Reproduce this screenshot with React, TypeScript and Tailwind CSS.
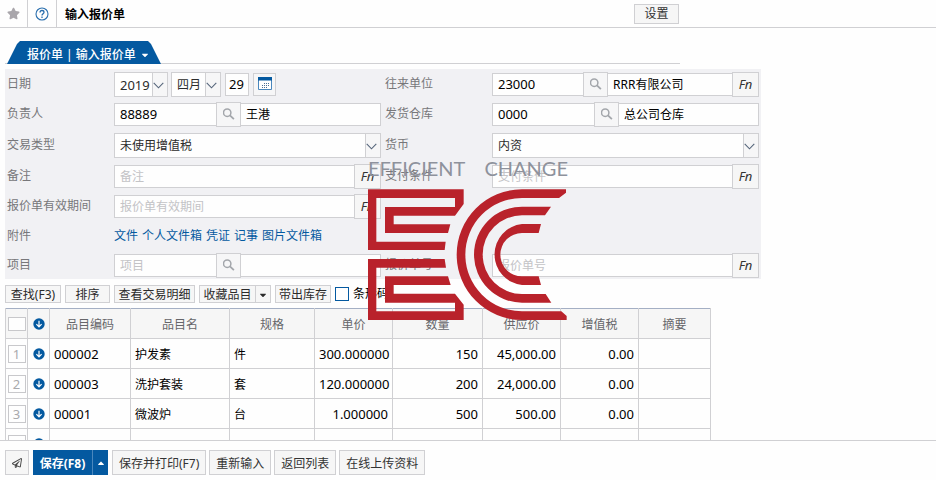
import type { ReactNode } from "react";
import { FaStar, FaCaretDown, FaCaretUp, FaRegPaperPlane } from "react-icons/fa";

const FONT = "font-['Noto_Sans','Noto_Sans_CJK_SC',sans-serif]";

// Icons
const SearchIcon = () => (
  <svg viewBox="0 0 12 12" className="size-3" fill="none" stroke="#a3a6ab">
    <circle cx="4.2" cy="4.7" r="3.7" strokeWidth="1.5" />
    <path d="M6.9 7.4 10.9 11.2" strokeWidth="1.8" />
  </svg>
);

const Chevron = () => (
  <svg viewBox="0 0 11 7" className="h-[7px] w-[11px]" fill="none" stroke="#55657a">
    <path d="M.7.8 5.5 5.8 10.3.8" strokeWidth="1.1" />
  </svg>
);

const CalendarIcon = () => (
  <svg viewBox="0 0 14 14" className="size-[14px] shrink-0">
    <path d="M.5.5h13v12H.5z" fill="#fff" stroke="#4a87bd" />
    <path d="M0 0h14v3.500H0z" fill="#0459a0" />
    <path
      d="M6 6h1v1H6zM8 6h1v1H8zM10 6h1v1h-1zM4 8h1v1H4zM6 8h1v1H6zM8 8h1v1H8zM10 8h1v1h-1zM4 10h1v1H4zM6 10h1v1H6zM8 10h1v1H8z"
      fill="#4a6f95"
    />
  </svg>
);

const HelpIcon = () => (
  <svg viewBox="0 0 14 14" className="size-[14px]" fill="none" stroke="#2a6fae">
    <circle cx="7" cy="7" r="6" strokeWidth="1.1" />
    <path d="M5 5.600C5 4.200 5.800 3.500 7 3.500s2 .8 2 1.800c0 1.400-2 1.500-2 3.200M7 9.600v1.300" strokeWidth="1.3" />
  </svg>
);

const DownIcon = () => (
  <svg viewBox="0 0 12 12" className="size-3" fill="none">
    <circle cx="6" cy="6" r="5.7" fill="#0459a0" />
    <path d="M6 2.800v6M3.400 6.200 6 8.800l2.600-2.600" stroke="#fff" strokeWidth="1.200" />
  </svg>
);

const Logo = () => (
  <div className="pointer-events-none absolute top-[159px] left-[368px] w-[200px]">
    <div className="flex justify-between font-['Lato',sans-serif] text-[20px] leading-[18px] text-[#8e929c]">
      <span>EFFICIENT</span>
      <span>CHANGE</span>
    </div>
    <svg viewBox="84 117 600 393" className="mt-3 h-[131px] w-[200px]" fill="#b9222b">
      <path d="M84 118H371V162L345 197H161V223H331L324 249H135V171H345V144H109V275H317L314 300H84Z" />
      <path d="M84 327H314L318 353H109V484H345V458H135V379H324L332 405H161V431H345L371 464V510H84Z" />
      <path d="M546 118H678V128L657 144H546A170 170 0 0 0 546 484H664L680 498V510H546A196 196 0 0 1 546 118Z" />
      <path d="M546 170H633L615 196H546A118 118 0 0 0 546 432H617L634 458H546A144 144 0 0 1 546 170Z" />
      <path d="M546 222H603L596 249H546A65 65 0 0 0 546 379H596L603 405H546A92 92 0 0 1 546 222Z" />
    </svg>
  </div>
);

// Form parts
type FieldProps = { label: string; id?: string; tall?: boolean; short?: boolean; children: ReactNode };

const Field = ({ label, id, tall, short, children }: FieldProps) => (
  <div className={`flex items-center ${tall ? "h-8" : short ? "h-7" : "h-[30px]"}`}>
    <label htmlFor={id} className="w-[107px] shrink-0 text-[#77777a]">
      {label}
    </label>
    <div className="flex min-w-0 flex-1 items-center">{children}</div>
  </div>
);

type BoxProps = { id?: string; label?: string; value?: string; hint?: string; className?: string; tight?: boolean };

const Box = ({ id, label, value, hint, className = "flex-1", tight }: BoxProps) => (
  <input
    id={id}
    aria-label={label}
    defaultValue={value}
    placeholder={hint}
    className={`h-[23px] min-w-0 border border-[#d0d0d3] bg-[#fefefe] text-black placeholder:text-[#c3c3c6] ${tight ? "px-[3px]" : "px-[5px]"} ${className}`}
  />
);

const SearchButton = () => (
  <button
    aria-label="搜索"
    className="-mx-px flex size-[25px] shrink-0 items-center justify-center border border-[#d0d0d3] bg-[#f6f6f7]"
  >
    <SearchIcon />
  </button>
);

const FnButton = () => (
  <button className="-ml-px h-[25px] w-[27px] shrink-0 border border-[#d0d0d3] bg-[#f6f6f6] text-[13px] text-[#333] italic">
    Fn
  </button>
);

type PickProps = { id?: string; label?: string; value: string; className?: string; numeric?: boolean };

const Pick = ({ id, label, value, className = "flex-1", numeric }: PickProps) => (
  <div className={`relative h-[25px] ${className}`}>
    <select
      id={id}
      aria-label={label}
      className={`size-full appearance-none border border-[#d0d0d3] bg-[#fefefe] pt-0.5 pl-[5px] text-[#2b2b2b] ${numeric ? "text-[13px]" : ""}`}
    >
      <option>{value}</option>
    </select>
    <span className="pointer-events-none absolute inset-y-px right-px flex w-[15px] items-center border-l border-[#d0d0d3] bg-[#f6f6f7] pt-0.5">
      <Chevron />
    </span>
  </div>
);

const BarButton = ({ children, className }: { children: ReactNode; className: string }) => (
  <button className={`flex h-[18px] items-center justify-center border border-[#d0d0d3] bg-[#f6f6f6] pt-px text-[#2b2b2b] ${className}`}>
    {children}
  </button>
);

const FootButton = ({ children }: { children: ReactNode }) => (
  <button className="h-[25px] border border-[#d0d0d3] bg-[#f6f6f6] px-1.5 pt-0.5 text-[#333]">{children}</button>
);

const links = ["文件", "个人文件箱", "凭证", "记事", "图片文件箱"];

const columns = [
  { title: "品目编码", width: "w-[81px]" },
  { title: "品目名", width: "w-[99px]" },
  { title: "规格", width: "w-[85px]" },
  { title: "单价", width: "w-[78px]" },
  { title: "数量", width: "w-[90px]" },
  { title: "供应价", width: "w-[78px]" },
  { title: "增值税", width: "w-[78px]" },
  { title: "摘要", width: "w-[72px]" },
];

const rows = [
  ["000002", "护发素", "件", "300.000000", "150", "45,000.00", "0.00", ""],
  ["000003", "洗护套装", "套", "120.000000", "200", "24,000.00", "0.00", ""],
  ["00001", "微波炉", "台", "1.000000", "500", "500.00", "0.00", ""],
  ["", "", "", "", "", "", "", ""],
];

function cellStyle(index: number) {
  if (index === 0) {
    return "py-0 text-left text-[13px]";
  }
  if (index > 2) {
    return "py-0 text-right text-[13px]";
  }
  return "pt-0.5 pb-0 text-left";
}

const ItemTable = () => (
  <table className="mt-[5px] w-[706px] table-fixed border-collapse">
    <thead>
      <tr className="h-[30px] border-t border-[#a4afc4] bg-[#f6f6f6] text-[#66666a]">
        <th className="w-[22px] border-x border-b border-[#d0d0d3] p-0">
          <input
            type="checkbox"
            aria-label="全选"
            className="mx-auto block h-[14px] w-[18px] appearance-none border border-[#c8c8cb] bg-[#fefefe]"
          />
        </th>
        <th className="w-[22px] border-x border-b border-[#d0d0d3] p-0">
          <button aria-label="全部向下" className="mx-auto block">
            <DownIcon />
          </button>
        </th>
        {columns.map((col) => (
          <th key={col.title} className={`border-x border-b border-[#d0d0d3] px-0 pt-0.5 pb-0 font-normal ${col.width}`}>
            {col.title}
          </th>
        ))}
      </tr>
    </thead>
    <tbody>
      {rows.map((row, i) => (
        <tr key={i} className="h-[30px] text-black">
          <td className="border border-[#d0d0d3] p-0">
            <button className="mx-auto block size-[18px] border border-[#c8c8cb] text-[13px] leading-4 text-[#a9a9ac]">
              {i + 1}
            </button>
          </td>
          <td className="border border-[#d0d0d3] p-0">
            <button aria-label="向下" className="mx-auto block">
              <DownIcon />
            </button>
          </td>
          {row.map((cell, j) => (
            <td key={j} className={`border border-[#d0d0d3] px-1 ${cellStyle(j)}`}>
              {cell}
            </td>
          ))}
        </tr>
      ))}
    </tbody>
  </table>
);

export default function App() {
  return (
    <div className={`relative flex h-screen flex-col overflow-hidden bg-[#fefefe] text-xs leading-4 ${FONT}`}>
      <header className="h-7 shrink-0 border-b border-[#d0d0d3]">
        <div className="flex h-full max-w-[679px] items-center">
          <button aria-label="收藏" className="flex h-full w-7 items-center justify-center border-r border-[#d0d0d3] text-[#a9a6ab]">
            <FaStar size={13} />
          </button>
          <button aria-label="帮助" className="flex h-full w-[29px] items-center justify-center border-r border-[#d0d0d3]">
            <HelpIcon />
          </button>
          <h1 className="ml-2 flex-1 pt-0.5 font-bold text-black">输入报价单</h1>
          <button className="h-5 w-[45px] border border-[#d0d0d3] bg-[#f6f6f6] pt-px text-[#333]">设置</button>
        </div>
      </header>

      <main className="min-h-0 flex-1 overflow-hidden px-[5px] pt-[13px]">
        <nav className="flex h-[23px] max-w-[675px] border-b border-[#d0d0d3] pl-0.5">
          <button className="flex h-[23px] w-[154px] shrink-0 items-center gap-1 bg-[#0459a0] pt-1 pl-5 text-white [clip-path:polygon(0_100%,10px_3px,13px_0,calc(100%-13px)_0,calc(100%-10px)_3px,100%_100%)]">
            <span className="font-medium">报价单 | 输入报价单</span>
            <FaCaretDown size={10} />
          </button>
        </nav>

        <form className="mt-[5px] grid max-w-[756px] grid-cols-2 gap-x-1 bg-[#f1f1f4] px-0.5" onSubmit={(e) => e.preventDefault()}>
          <Field label="日期" id="year">
            <Pick id="year" value="2019" className="mr-[3px] w-[54px]" numeric />
            <Pick label="月" value="四月" className="mr-1 w-[50px]" />
            <Box label="日" value="29" className="mr-1 w-6 text-[13px]" tight />
            <button aria-label="日历" className="flex h-[23px] w-[23px] items-center justify-center border border-[#d0d0d3] bg-[#f6f6f7]">
              <CalendarIcon />
            </button>
          </Field>
          <Field label="往来单位" id="partner">
            <Box id="partner" value="23000" className="w-[92px] text-[13px]" />
            <SearchButton />
            <Box label="往来单位名" value="RRR有限公司" />
            <FnButton />
          </Field>
          <Field label="负责人" id="owner">
            <Box id="owner" value="88889" className="w-[103px] text-[13px]" />
            <SearchButton />
            <Box label="负责人名" value="王港" />
          </Field>
          <Field label="发货仓库" id="depot">
            <Box id="depot" value="0000" className="w-[103px] text-[13px]" />
            <SearchButton />
            <Box label="仓库名" value="总公司仓库" />
          </Field>
          <Field label="交易类型" id="kind" tall>
            <Pick id="kind" value="未使用增值税" />
          </Field>
          <Field label="货币" id="currency" tall>
            <Pick id="currency" value="内资" />
          </Field>
          <Field label="备注" id="memo">
            <Box id="memo" hint="备注" />
            <FnButton />
          </Field>
          <Field label="支付条件" id="payment">
            <Box id="payment" hint="支付条件" />
            <FnButton />
          </Field>
          <Field label="报价单有效期间" id="validity">
            <Box id="validity" hint="报价单有效期间" />
            <FnButton />
          </Field>
          <div />
          <Field label="附件">
            <div className="flex gap-1 whitespace-nowrap text-[#0459a0]">
              {links.map((link) => (
                <a key={link} href="#">
                  {link}
                </a>
              ))}
            </div>
          </Field>
          <div />
          <Field label="项目" id="project" short>
            <Box id="project" hint="项目" className="w-[103px]" />
            <SearchButton />
            <Box label="项目名" />
          </Field>
          <Field label="报价单号" id="number" short>
            <Box id="number" hint="报价单号" />
            <FnButton />
          </Field>
        </form>

        <div className="mt-1.5 flex gap-1 whitespace-nowrap">
          <BarButton className="w-14">查找(F3)</BarButton>
          <BarButton className="w-[45px]">排序</BarButton>
          <BarButton className="w-[81px]">查看交易明细</BarButton>
          <div className="flex">
            <BarButton className="w-[57px]">收藏品目</BarButton>
            <BarButton className="-ml-px w-4">
              <FaCaretDown size={10} />
            </BarButton>
          </div>
          <BarButton className="w-14">带出库存</BarButton>
          <label className="flex items-center gap-1 text-black">
            <input type="checkbox" className="size-[14px] appearance-none border border-[#0459a0] bg-[#fefefe]" />
            条形码
          </label>
        </div>

        <ItemTable />
      </main>

      <footer className="flex h-10 shrink-0 items-start gap-1 border-t border-[#d0d0d3] px-[5px] pt-[9px] whitespace-nowrap">
        <button aria-label="发送" className="flex h-[25px] w-6 items-center justify-center border border-[#d0d0d3] bg-[#f6f6f6] text-[#444]">
          <FaRegPaperPlane size={10} />
        </button>
        <div className="flex h-[25px] bg-[#0459a0] font-bold text-white">
          <button className="w-[59px] pt-0.5">保存(F8)</button>
          <button aria-label="更多" className="flex w-4 items-center justify-center border-l border-[#4a87bd]">
            <FaCaretUp size={10} />
          </button>
        </div>
        <div className="flex gap-[3px]">
          <FootButton>保存并打印(F7)</FootButton>
          <FootButton>重新输入</FootButton>
          <FootButton>返回列表</FootButton>
          <FootButton>在线上传资料</FootButton>
        </div>
      </footer>

      <Logo />
    </div>
  );
}
